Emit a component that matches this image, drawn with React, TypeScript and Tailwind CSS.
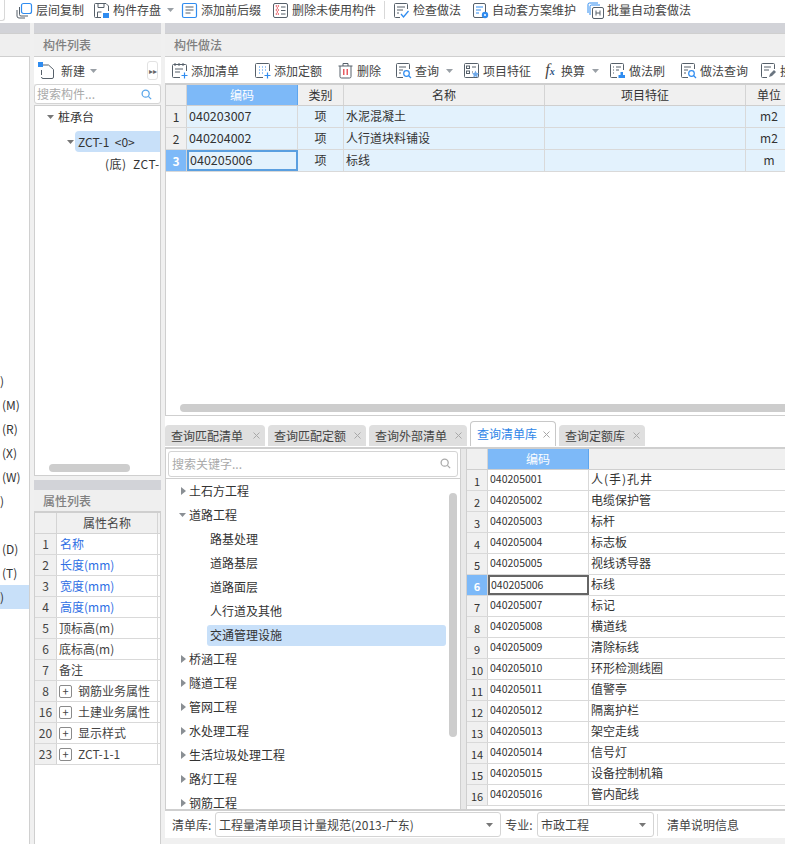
import React from "react";

const F = '"Noto Sans CJK SC","Liberation Sans",sans-serif';

function Ico({ k }: { k: string }) {
  const d = "#56606a";
  const b = "#2f8cf0";
  const common = { width: 17, height: 17, viewBox: "0 0 17 17", fill: "none", className: "shrink-0" } as const;
  switch (k) {
    case "copy":
      return <svg {...common}><rect x="5.5" y="1.500" width="10" height="10" rx="2" stroke={b} strokeWidth="1.200" /><path d="M3.500 5v7.500a1.500 1.500 0 0 0 1.500 1.500h7" stroke={d} /><path d="M1 8v6a2 2 0 0 0 2 2h6" stroke={d} /></svg>;
    case "save":
      return <svg {...common}><path d="M8 15.500H2.500a1 1 0 0 1-1-1v-12a1 1 0 0 1 1-1h10.500l2.500 2.500V9" stroke={d} /><path d="M5 1.500v4h6v-4M4.500 15V10h4" stroke={d} /><rect x="10" y="11" width="6" height="5" fill={b} /></svg>;
    case "prefix":
      return <svg {...common}><rect x="1.500" y="1.500" width="14" height="14" rx="1.500" stroke={b} strokeWidth="1.200" /><path d="M4.500 5h8M4.500 8h8M4.500 11h5" stroke={d} /></svg>;
    case "del":
      return <svg {...common}><rect x="1.500" y="1.500" width="14" height="14" rx="1.500" stroke={d} /><path d="M9 5h4.500M9 8.500h4.500M9 12h4.500" stroke={d} /><path d="M3.800 4h1M5.800 4h1M4.800 6h1M3.800 8h1M5.800 8h1M4.800 10h1M3.800 12h1M5.800 12h1" stroke="#e0333b" strokeWidth="1.500" /></svg>;
    case "check":
      return <svg {...common}><path d="M14.500 7V2.500a1 1 0 0 0-1-1h-11a1 1 0 0 0-1 1v12a1 1 0 0 0 1 1H7" stroke={d} /><path d="M4 5h8M4 8h6M4 11h2" stroke={d} /><path d="M8 12l2.500 3 5-6" stroke={b} strokeWidth="1.300" /></svg>;
    case "auto":
      return <svg {...common}><rect x="1.500" y="1.500" width="12" height="14" rx="1.500" stroke={d} /><path d="M4 5h7M4 8h5M4 11h3" stroke={b} /><circle cx="13" cy="13" r="3.200" fill={b} /><circle cx="13" cy="13" r="1" fill="#fff" /></svg>;
    case "batch":
      return <svg {...common}><path d="M1 11V2.500A1.500 1.500 0 0 1 2.500 1H11M3 13V4.500A1.500 1.500 0 0 1 4.500 3H13" stroke={b} /><rect x="5.500" y="5.500" width="11" height="11" rx="1.500" stroke={d} /><path d="M9 8.500v5M13 8.500v5M9 11h4" stroke={d} /></svg>;
    case "addlist":
      return <svg {...common}><path d="M15.500 9V3.500a1 1 0 0 0-1-1h-12a1 1 0 0 0-1 1v11a1 1 0 0 0 1 1H9" stroke={d} /><path d="M4 1v3M8 1v3M12 1v3M4 7h8M4 10h5" stroke={d} /><path d="M13.500 10.500v6M10.500 13.500h6" stroke={b} strokeWidth="1.200" /></svg>;
    case "addquota":
      return <svg {...common}><path d="M15.500 9V2.500a1 1 0 0 0-1-1h-12a1 1 0 0 0-1 1v12a1 1 0 0 0 1 1H9" stroke={d} /><path d="M5 5h1M8 5h1M11 5h1M5 8h1M8 8h1M11 8h1M5 11h1M8 11h1" stroke={b} /><path d="M13.500 10.500v6M10.500 13.500h6" stroke={b} strokeWidth="1.200" /></svg>;
    case "trash":
      return <svg {...common}><path d="M1.500 4h14M6 4V1.500h5V4M3 4v10.500a1.500 1.500 0 0 0 1.500 1.500h8a1.500 1.500 0 0 0 1.500-1.500V4" stroke={d} /><path d="M6.800 7v6M10.200 7v6" stroke="#e0333b" strokeWidth="1.200" /></svg>;
    case "query":
      return <svg {...common}><path d="M14.500 7V2.500a1 1 0 0 0-1-1h-11a1 1 0 0 0-1 1v12a1 1 0 0 0 1 1H8" stroke={d} /><path d="M4 5h7M4 8h4M4 11h2" stroke={d} /><circle cx="11.500" cy="11.500" r="2.800" stroke={b} strokeWidth="1.200" /><path d="M13.500 13.500l2.500 2.500" stroke={b} strokeWidth="1.200" /></svg>;
    case "feature":
      return <svg {...common}><rect x="1.500" y="1.500" width="14" height="14" rx="1" stroke={d} /><rect x="3.500" y="4" width="3" height="2.500" stroke={d} /><rect x="3.500" y="9" width="3" height="2.500" stroke={d} /><path d="M9 5h4M9 10h1" stroke={d} /><path d="M12.500 8.500l1.200 2.500 2.300.3-1.700 1.700.5 2.500-2.300-1.200-2.300 1.200.5-2.500L9 11.300l2.300-.3z" fill="#6ea8e8" /></svg>;
    case "brush":
      return <svg {...common}><path d="M8 15.500H2.500a1 1 0 0 1-1-1v-12a1 1 0 0 1 1-1h11a1 1 0 0 1 1 1V8" stroke={d} /><path d="M4 5h1M7 5h5M4 8h1M7 8h3M4 11h1" stroke={d} /><path d="M9.500 13h6.500v3H9.500zM11.500 13v-3h2.500v3" fill={b} /></svg>;
    case "swap":
      return <svg {...common}><path d="M14.500 7V2.500a1 1 0 0 0-1-1h-11a1 1 0 0 0-1 1v12a1 1 0 0 0 1 1H7" stroke={d} /><path d="M4 5h7M4 8h5" stroke={d} /><path d="M9 15l1-3 4-4 2 2-4 4z" fill="#6a7580" /></svg>;
    case "new":
      return <svg {...common}><path d="M3.500 3h7l5 4.500v7.500a1.500 1.500 0 0 1-1.500 1.500H5a1.500 1.500 0 0 1-1.500-1.500" stroke={d} /><path d="M3.500 8v5" stroke={d} /><rect x="0" y="0" width="5" height="5" fill={b} /></svg>;
    default:
      return null;
  }
}

const Caret = ({ c = "#9aa0a6" }: { c?: string }) => (
  <svg width="7" height="4" viewBox="0 0 7 4" className="shrink-0"><path d="M0 0h7L3.500 4z" fill={c} /></svg>
);
const CaretR = () => (
  <svg width="5" height="8" viewBox="0 0 5 8" className="shrink-0"><path d="M0 0l5 4-5 4z" fill="#8a8f94" /></svg>
);
const Search = ({ c, s = 13 }: { c: string; s?: number }) => (
  <svg width={s} height={s} viewBox="0 0 13 13" fill="none" className="shrink-0"><circle cx="5.500" cy="5.500" r="4.200" stroke={c} strokeWidth="1.500" /><path d="M8.700 8.700L12 12" stroke={c} strokeWidth="1.500" /></svg>
);
const Close = () => (
  <svg width="7" height="7" viewBox="0 0 7 7" className="shrink-0"><path d="M.5.500l6 6M6.500.500l-6 6" stroke="#a8a8a8" /></svg>
);

function TopTool({ k, t, w, caret, ml = "ml-[7px]" }: { k: string; t: string; w: string; caret?: boolean; ml?: string }) {
  return (
    <div className={`flex items-center gap-[3px] shrink-0 ${w}`}>
      <Ico k={k} />
      <span>{t}</span>
      {caret && <span className={ml}><Caret /></span>}
    </div>
  );
}

const topRows = [
  ["1", "040203007", "水泥混凝土", "m2"],
  ["2", "040204002", "人行道块料铺设", "m2"],
  ["3", "040205006", "标线", "m"],
];

const libRows = ["人(手)孔井", "电缆保护管", "标杆", "标志板", "视线诱导器", "标线", "标记", "横道线", "清除标线", "环形检测线圈", "值警亭", "隔离护栏", "架空走线", "信号灯", "设备控制机箱", "管内配线"];

const props: [string, string, boolean, boolean][] = [
  ["1", "名称", true, false],
  ["2", "长度(mm)", true, false],
  ["3", "宽度(mm)", true, false],
  ["4", "高度(mm)", true, false],
  ["5", "顶标高(m)", false, false],
  ["6", "底标高(m)", false, false],
  ["7", "备注", false, false],
  ["8", "钢筋业务属性", false, true],
  ["16", "土建业务属性", false, true],
  ["20", "显示样式", false, true],
  ["23", "ZCT-1-1", false, true],
];

const tree: [string, number, boolean?][] = [
  ["土石方工程", 1], ["道路工程", 2], ["路基处理", 0], ["道路基层", 0], ["道路面层", 0], ["人行道及其他", 0], ["交通管理设施", 0, true],
  ["桥涵工程", 1], ["隧道工程", 1], ["管网工程", 1], ["水处理工程", 1], ["生活垃圾处理工程", 1], ["路灯工程", 1], ["钢筋工程", 1],
];

const leftItems: [string, boolean?][] = [[")"], ["(M)"], ["(R)"], ["(X)"], ["(W)"], [")"], [""], ["(D)"], ["(T)"], [")", true]];

function Tab({ t, active, w }: { t: string; active?: boolean; w: string }) {
  return (
    <div className={`flex items-center justify-between pl-[6px] pr-[5px] rounded-t-[4px] shrink-0 ${w} ${active ? "h-[25px] bg-white border border-b-0 border-[#c8c8c8] text-[#2f86e8]" : "h-[21px] mt-[4px] bg-[#dfdfdf] text-[#444]"}`}>
      <span>{t}</span>
      <Close />
    </div>
  );
}

export default function App() {
  return (
    <div className="w-[785px] h-[844px] overflow-hidden bg-[#f0f0f0] flex flex-col text-[12px] leading-[16px] text-[#333]" style={{ fontFamily: F }}>
      {/* top toolbar */}
      <div className="h-[23px] pb-[3px] bg-white flex items-center shrink-0 text-[#444]">
        <div className="w-[5px] h-[21px] self-start border-r border-b border-[#d8d8d8] rounded-br-[3px] mr-[11px] shrink-0" />
        <TopTool k="copy" t="层间复制" w="w-[77px]" />
        <TopTool k="save" t="构件存盘" w="w-[88px]" caret ml="ml-[3px]" />
        <TopTool k="prefix" t="添加前后缀" w="w-[91px]" />
        <TopTool k="del" t="删除未使用构件" w="w-[112px]" />
        <div className="w-px h-[18px] bg-[#d8d8d8] shrink-0 mr-[8px]" />
        <TopTool k="check" t="检查做法" w="w-[79px]" />
        <TopTool k="auto" t="自动套方案维护" w="w-[115px]" />
        <TopTool k="batch" t="批量自动套做法" w="w-[110px]" />
      </div>

      <div className="flex-1 flex min-h-0">
        {/* left column */}
        <div className="w-[30px] shrink-0 flex flex-col">
          <div className="h-[10px] bg-[#d2d3d8] shrink-0" />
          <div className="h-[22px] bg-[#efefef] border-y border-[#cfcfcf] shrink-0 box-content" />
          <div className="flex-1 bg-white pt-[312px] border-r border-[#d0d0d0] overflow-hidden">
            {leftItems.map(([t, sel], i) => (
              <div key={i} className={`h-[24px] flex items-center whitespace-nowrap overflow-hidden text-[#333] ${t === ")" ? "pl-0" : "pl-[2px]"} ${sel ? "bg-[#c8e0f9]" : ""}`}>
                <span>{t}</span>
              </div>
            ))}
          </div>
        </div>

        <div className="w-[4px] shrink-0" />

        {/* column 2 */}
        <div className="w-[127px] shrink-0 flex flex-col">
          <div className="h-[10px] bg-[#d2d3d8] shrink-0" />
          <div className="h-[22px] bg-[#efefef] border-y border-[#cfcfcf] box-content flex items-center pl-[9px] font-medium text-[#808080] shrink-0">构件列表</div>
          <div className="h-[27px] bg-white flex items-center pl-[4px] shrink-0 relative">
            <Ico k="new" />
            <span className="ml-[6px] text-[#444]">新建</span>
            <span className="ml-[5px]"><Caret /></span>
            <div className="ml-auto mr-[3px] w-[11px] h-[19px] border border-[#e2e2e2] rounded-[3px] flex items-center justify-center text-[8px] text-[#666]">▸▸</div>
          </div>
          <div className="h-[20px] bg-white border border-[#d4d4d4] rounded-[3px] flex items-center justify-between px-[2px] pr-[8px] text-[#aaa] shrink-0">
            <span>搜索构件...</span>
            <Search c="#5aa6ea" s={11} />
          </div>
          <div className="h-[371px] mt-px bg-white border border-[#cfcfcf] shrink-0 relative overflow-hidden">
            <div className="flex items-center h-[22px] pl-[12px]"><Caret c="#777" /><span className="ml-[4px]">桩承台</span></div>
            <div className="ml-[40px] h-[21px] mt-[3px] bg-[#c8e0f9] rounded-l-[4px] flex items-center whitespace-pre relative">
              <span className="absolute left-[-8px] top-[9px]"><Caret c="#777" /></span>
              <span className="pl-[3px]">ZCT-1  &lt;0&gt;</span>
            </div>
            <div className="h-[24px] pl-[70px] flex items-center whitespace-pre tracking-[0.5px]">(底)  ZCT-</div>
            <div className="absolute left-[14px] top-[358px] w-[81px] h-[8px] rounded-full bg-[#cdcdcd]" />
          </div>
          <div className="h-[4px] shrink-0" />
          <div className="h-[10px] bg-[#d2d3d8] shrink-0" />
          <div className="h-[23px] bg-[#efefef] border-b-2 border-[#cfcfcf] flex items-center pl-[9px] font-medium text-[#808080] shrink-0">属性列表</div>
          <div className="flex-1 bg-white border-x border-[#cfcfcf]">
            <div className="flex h-[21px] border-b border-[#d4d4d4] bg-[#f0f0f0]">
              <div className="w-[22px] border-r border-[#d4d4d4]" />
              <div className="w-[101px] border-r border-[#d4d4d4] text-center leading-[20px] text-[#444]">属性名称</div>
            </div>
            {props.map(([n, t, blue, plus]) => (
              <div key={n} className="flex h-[21px] border-b border-[#d9d9d9]">
                <div className="w-[22px] bg-[#f0f0f0] border-r border-[#d4d4d4] text-center leading-[20px] text-[#444] shrink-0">{n}</div>
                <div className={`w-[101px] border-r border-[#d9d9d9] flex items-center pl-[2px] shrink-0 whitespace-nowrap ${blue ? "text-[#2f6fe4] pl-[3px]" : "text-[#444]"}`}>
                  {plus && (
                    <span className="w-[13px] h-[13px] border border-[#8a8a8a] rounded-[2px] flex items-center justify-center text-[11px] leading-none mr-[6px] shrink-0">+</span>
                  )}
                  {t}
                </div>
              </div>
            ))}
          </div>
        </div>

        <div className="w-[4px] shrink-0" />

        {/* column 3 */}
        <div className="flex-1 min-w-0 flex flex-col">
          <div className="h-[10px] bg-[#d2d3d8] shrink-0" />
          <div className="h-[22px] bg-[#efefef] border-y border-[#cfcfcf] box-content flex items-center pl-[9px] font-medium text-[#808080] shrink-0">构件做法</div>
          <div className="h-[27px] bg-white flex items-center pl-[6px] shrink-0 whitespace-nowrap text-[#444] overflow-hidden">
            <TopTool k="addlist" t="添加清单" w="w-[83px]" />
            <TopTool k="addquota" t="添加定额" w="w-[83px]" />
            <TopTool k="trash" t="删除" w="w-[58px]" />
            <TopTool k="query" t="查询" w="w-[68px]" caret ml="ml-[4px]" />
            <TopTool k="feature" t="项目特征" w="w-[80px]" />
            <div className="flex items-center gap-[4px] w-[66px] shrink-0">
              <span className="w-[14px] italic text-[16px] text-[#444] text-center whitespace-nowrap" style={{ fontFamily: '"Liberation Serif",serif' }}>f<span className="text-[10px] font-bold text-[#2a4f80]">x</span></span>
              <span>换算</span>
              <span className="ml-[3px]"><Caret /></span>
            </div>
            <TopTool k="brush" t="做法刷" w="w-[71px]" />
            <TopTool k="query" t="做法查询" w="w-[80px]" />
            <TopTool k="swap" t="换算" w="w-[40px]" />
          </div>

          {/* top table */}
          <div className="h-[330px] shrink-0 bg-white border-t-2 border-b border-[#cfcfcf] border-l relative overflow-hidden box-content -mt-px">
            <div className="flex h-[21px] bg-[#f0f0f0] border-b border-[#cfcfcf]">
              <div className="w-[21px] border-r border-[#d4d4d4] shrink-0" />
              <div className="w-[111px] bg-[#7db9f8] text-white border-r border-[#5da5ee] text-center leading-[20px] shrink-0">编码</div>
              <div className="w-[46px] border-r border-[#d4d4d4] text-center leading-[20px] shrink-0">类别</div>
              <div className="w-[201px] border-r border-[#d4d4d4] text-center leading-[20px] shrink-0">名称</div>
              <div className="w-[201px] border-r border-[#d4d4d4] text-center leading-[20px] shrink-0">项目特征</div>
              <div className="w-[46px] text-center leading-[20px] shrink-0">单位</div>
            </div>
            {topRows.map(([n, code, name, unit], i) => (
              <div key={n} className="flex h-[22px] border-b border-[#d9d9d9] bg-[#e3f2fd]">
                <div className={`w-[21px] border-r border-[#d4d4d4] text-center leading-[21px] shrink-0 ${i === 2 ? "bg-[#7db9f8] text-white font-bold" : "bg-[#f0f0f0]"}`}>{n}</div>
                <div className={`w-[111px] shrink-0 flex items-center text-[12.500px] pb-px ${i === 2 ? "border-2 border-[#5a9fe0] pl-px" : "border-r border-[#d9d9d9] pl-[2px]"}`}>{code}</div>
                <div className="w-[46px] border-r border-[#d9d9d9] text-center leading-[20px] shrink-0">项</div>
                <div className="w-[201px] border-r border-[#d9d9d9] pl-[2px] leading-[20px] shrink-0">{name}</div>
                <div className="w-[201px] border-r border-[#d9d9d9] shrink-0" />
                <div className="w-[46px] text-center leading-[20px] shrink-0">{unit}</div>
              </div>
            ))}
            <div className="absolute left-[14px] bottom-[3px] w-[640px] h-[8px] rounded-full bg-[#cdcdcd]" />
          </div>

          {/* tabs */}
          <div className="h-[5px] bg-white shrink-0" />
          <div className="h-[26px] bg-white flex items-start gap-[3px] shrink-0 whitespace-nowrap">
            <Tab t="查询匹配清单" w="w-[100px]" />
            <Tab t="查询匹配定额" w="w-[98px]" />
            <Tab t="查询外部清单" w="w-[98px]" />
            <Tab t="查询清单库" w="w-[86px]" active />
            <Tab t="查询定额库" w="w-[86px]" />
          </div>

          {/* bottom split */}
          <div className="h-[362px] shrink-0 flex border-t-2 border-[#cfcfcf] overflow-hidden">
            <div className="w-[296px] shrink-0 bg-white border-x border-[#cfcfcf] flex flex-col overflow-hidden">
              <div className="h-[30px] shrink-0 border-b border-[#cfcfcf] flex items-center px-[2px]">
                <div className="h-[26px] w-full border border-[#d4d4d4] rounded-[3px] flex items-center justify-between px-[3px] pr-[6px] text-[#aaa]">
                  <span>搜索关键字...</span>
                  <Search c="#aaa" s={11} />
                </div>
              </div>
              <div className="flex-1 relative overflow-hidden">
                {tree.map(([t, kind, sel]) => (
                  <div key={t} className="h-[24px] flex items-center relative">
                    {sel && <div className="absolute left-[41px] top-[2px] w-[239px] h-[21px] rounded-[3px] bg-[#c8e0f9]" />}
                    {kind === 1 && <span className="ml-[15px] mr-[3px]"><CaretR /></span>}
                    {kind === 2 && <span className="ml-[13px] mr-[3px]"><Caret c="#8a8f94" /></span>}
                    <span className={`relative ${kind === 0 ? "ml-[44px]" : ""}`}>{t}</span>
                  </div>
                ))}
                <div className="absolute left-[283px] top-[14px] w-[8px] h-[244px] rounded-full bg-[#cdcdcd]" />
              </div>
            </div>
            <div className="w-[5px] bg-[#e8e8e8] shrink-0" />
            <div className="flex-1 min-w-0 bg-white border-l border-[#cfcfcf] overflow-hidden">
              <div className="flex h-[21px] bg-[#f0f0f0] border-b border-[#cfcfcf]">
                <div className="w-[21px] border-r border-[#d4d4d4] shrink-0" />
                <div className="w-[101px] bg-[#7db9f8] text-white text-center leading-[20px] border-r border-[#5da5ee] shrink-0">编码</div>
              </div>
              {libRows.map((t, i) => (
                <div key={i} className="flex h-[21px] border-b border-[#d9d9d9] whitespace-nowrap">
                  <div className={`w-[21px] border-r border-[#d4d4d4] text-center leading-[22px] text-[11px] shrink-0 ${i === 5 ? "bg-[#7db9f8] text-white font-bold" : "bg-[#f0f0f0]"}`}>{i + 1}</div>
                  <div className={`w-[101px] text-[10.500px] shrink-0 ${i === 5 ? "border-2 border-[#666] pl-[1px] leading-[15px]" : "border-r border-[#d9d9d9] pl-[2px] leading-[18px]"}`}>{`0402050${String(i + 1).padStart(2, "0")}`}</div>
                  <div className={`pl-[2px] leading-[18px] text-[#333] ${i === 0 ? "tracking-[1px]" : ""}`}>{t}</div>
                </div>
              ))}
            </div>
          </div>

          {/* bottom bar */}
          <div className="h-[29px] bg-white border-t-2 border-[#cfcfcf] flex items-center pl-[7px] shrink-0 whitespace-nowrap text-[#444]">
            <span className="w-[43px] shrink-0">清单库:</span>
            <div className="w-[286px] h-[25px] border border-[#d4d4d4] rounded-[3px] flex items-center justify-between pl-[3px] pr-[7px] shrink-0">
              <span>工程量清单项目计量规范(2013-广东)</span><Caret c="#777" />
            </div>
            <span className="w-[36px] text-center shrink-0">专业:</span>
            <div className="w-[117px] h-[25px] border border-[#d4d4d4] rounded-[3px] flex items-center justify-between pl-[3px] pr-[7px] shrink-0">
              <span>市政工程</span><Caret c="#777" />
            </div>
            <div className="w-px h-[22px] bg-[#ddd] ml-[3px] mr-[9px] shrink-0" />
            <span>清单说明信息</span>
          </div>
        </div>
      </div>
    </div>
  );
}
